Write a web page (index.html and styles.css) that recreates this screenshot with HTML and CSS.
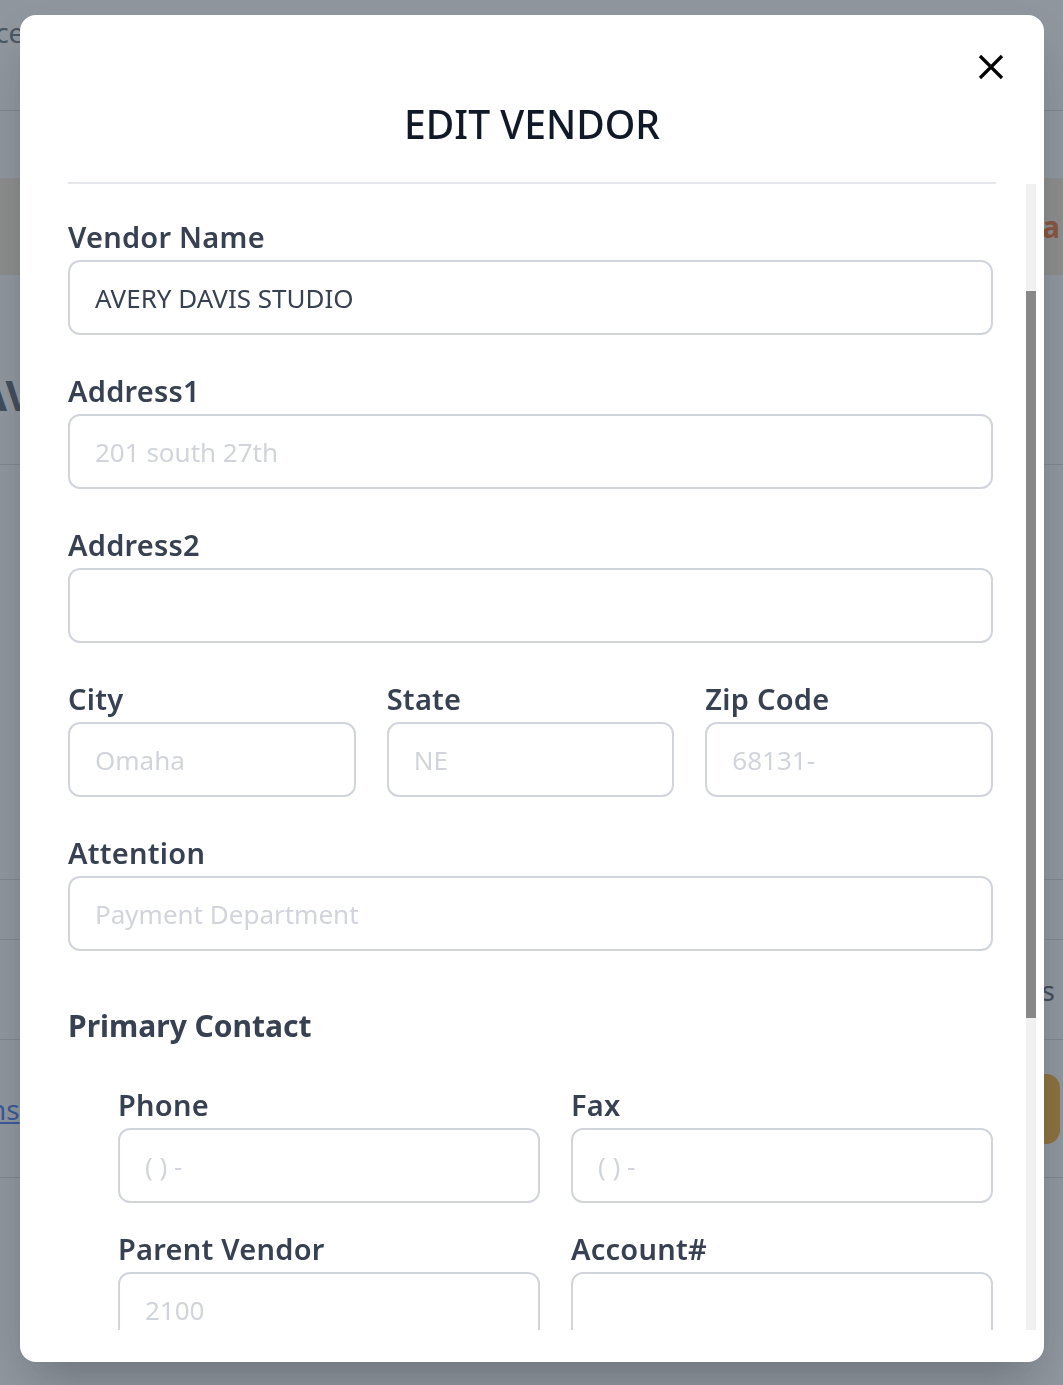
FILE: index.html
```html
<!DOCTYPE html>
<html lang="en">
<head>
<meta charset="utf-8">
<title>Edit Vendor</title>
<link rel="stylesheet" href="styles.css">
</head>
<body>
<div class="page">
  <div class="bg-row bg-top"><span class="bg-crumb">Invoice</span></div>
  <div class="bg-row bg-gap"></div>
  <div class="bg-band"><span class="bg-band-text">Data</span></div>
  <div class="bg-row bg-title"><span class="bg-name">AVERY DAVIS STUDIO</span></div>
  <div class="bg-row bg-tall"></div>
  <div class="bg-row bg-short"></div>
  <div class="bg-row bg-mid"><span class="bg-right-text">Details</span></div>
  <div class="bg-row bg-actions"><a class="bg-link">Transactions</a><span class="bg-btn">Save</span></div>
</div>
<div class="backdrop"></div>
<div class="modal" role="dialog" aria-labelledby="modal-title">
  <button class="close" type="button" aria-label="Close">
    <svg viewBox="0 0 26 26" width="26" height="26"><path d="M2 2L24 24M24 2L2 24" stroke="#000" stroke-width="3.2" fill="none"/></svg>
  </button>
  <div class="modal-header">
    <h2 class="modal-title" id="modal-title">EDIT VENDOR</h2>
  </div>
  <div class="modal-main">
    <div class="modal-body">
      <form class="form">
        <div class="field">
          <label class="label">Vendor Number</label>
          <input class="input" type="text" placeholder="1045">
        </div>
        <div class="field">
          <label class="label">Vendor Name</label>
          <input class="input" type="text" value="AVERY DAVIS STUDIO">
        </div>
        <div class="field">
          <label class="label">Address1</label>
          <input class="input" type="text" placeholder="201 south 27th">
        </div>
        <div class="field">
          <label class="label">Address2</label>
          <input class="input" type="text">
        </div>
        <div class="row-3">
          <div>
            <label class="label">City</label>
            <input class="input" type="text" placeholder="Omaha">
          </div>
          <div>
            <label class="label">State</label>
            <input class="input" type="text" placeholder="NE">
          </div>
          <div>
            <label class="label">Zip Code</label>
            <input class="input" type="text" placeholder="68131-">
          </div>
        </div>
        <div class="field">
          <label class="label">Attention</label>
          <input class="input" type="text" placeholder="Payment Department">
        </div>
        <h3 class="section-title">Primary Contact</h3>
        <div class="contact-grid">
          <div>
            <label class="label">Phone</label>
            <input class="input" type="text" placeholder="( ) -">
          </div>
          <div>
            <label class="label">Fax</label>
            <input class="input" type="text" placeholder="( ) -">
          </div>
          <div>
            <label class="label">Parent Vendor</label>
            <input class="input" type="text" placeholder="2100">
          </div>
          <div>
            <label class="label">Account#</label>
            <input class="input" type="text">
          </div>
          <div>
            <label class="label">Email</label>
            <input class="input" type="text">
          </div>
          <div>
            <label class="label">Website</label>
            <input class="input" type="text">
          </div>
        </div>
        <div class="field field-after">
          <label class="label">Terms</label>
          <input class="input" type="text">
        </div>
        <div class="actions">
          <button type="button" class="btn btn-cancel">Cancel</button>
          <button type="button" class="btn btn-save">Save</button>
        </div>
      </form>
    </div>
    <div class="scrollbar"><div class="scrollbar-thumb"></div></div>
  </div>
</div>
<script src="script.js"></script>
</body>
</html>
```

FILE: styles.css
```css
html, body {
  margin: 0;
  padding: 0;
}
body {
  width: 1063px;
  height: 1385px;
  overflow: hidden;
  background: #ffffff;
  font-family: "Noto Sans", "Open Sans", "DejaVu Sans", sans-serif;
}

/* background page */
.page {
  width: 1063px;
  height: 1385px;
  overflow: hidden;
}
.bg-row {
  border-bottom: 1px solid #d1d5db;
  box-sizing: border-box;
  display: flex;
  align-items: center;
}
.bg-top {
  height: 111px;
  align-items: flex-start;
  padding-top: 14px;
}
.bg-crumb {
  margin-left: -70px;
  font-size: 28px;
  line-height: 36px;
  color: #4b5563;
}
.bg-gap {
  height: 67px;
  border-bottom: 0;
}
.bg-band {
  height: 97px;
  background: #f7e7d1;
  display: flex;
  align-items: center;
  justify-content: flex-end;
}
.bg-band-text {
  margin-right: 3px;
  font-size: 30px;
  font-weight: 700;
  color: #ea580c;
}
.bg-title {
  height: 190px;
  padding-top: 50px;
}
.bg-name {
  margin-left: -22px;
  font-size: 42px;
  font-weight: 700;
  color: #374151;
  white-space: nowrap;
}
.bg-tall {
  height: 415px;
}
.bg-short {
  height: 60px;
}
.bg-mid {
  height: 100px;
  justify-content: flex-end;
}
.bg-right-text {
  margin-right: 8px;
  font-size: 28px;
  color: #374151;
}
.bg-actions {
  height: 138px;
  justify-content: space-between;
}
.bg-link {
  margin-left: -146px;
  font-size: 28px;
  color: #2563eb;
  text-decoration: underline;
}
.bg-btn {
  margin-right: 3px;
  width: 160px;
  height: 70px;
  border-radius: 14px;
  background: #f59e0b;
  color: #ffffff;
  font-size: 26px;
  display: flex;
  align-items: center;
  justify-content: center;
}

.backdrop {
  position: fixed;
  inset: 0;
  background: rgba(75, 85, 99, 0.62);
}

/* modal */
.modal {
  position: fixed;
  left: 20px;
  top: 15px;
  width: 1024px;
  height: 1347px;
  box-sizing: border-box;
  background: #ffffff;
  border-radius: 16px;
  padding: 0 8px 32px 48px;
  display: flex;
  flex-direction: column;
  box-shadow: 0 25px 50px -12px rgba(0, 0, 0, 0.25);
}
.close {
  position: absolute;
  top: 39px;
  right: 40px;
  width: 26px;
  height: 26px;
  padding: 0;
  border: 0;
  background: none;
  cursor: pointer;
}
.close svg {
  display: block;
}
.modal-header {
  margin-right: 40px;
  padding: 85px 0 34px;
  border-bottom: 2px solid #e5e7eb;
  flex: none;
}
.modal-title {
  margin: 0;
  text-align: center;
  font-size: 39px;
  line-height: 48px;
  font-weight: 500;
  color: #111827;
}
.modal-main {
  flex: 1;
  min-height: 0;
  display: flex;
}
.modal-body {
  flex: 1;
  min-width: 0;
  overflow: hidden;
}
.scrollbar {
  flex: none;
  width: 10px;
  background: #f1f1f1;
}
.scrollbar-thumb {
  width: 10px;
  height: 727px;
  background: #888888;
}

.form {
  display: flex;
  flex-direction: column;
  padding: 48px 33px 64px 0;
}
.field {
  margin-bottom: 36px;
}
.field-after {
  margin-top: 36px;
  margin-bottom: 0;
}
.label {
  display: block;
  font-size: 29px;
  line-height: 40px;
  letter-spacing: 0.25px;
  font-weight: 600;
  color: #374151;
  margin-bottom: 3px;
}
.input {
  display: block;
  width: 100%;
  height: 75px;
  box-sizing: border-box;
  border: 2px solid #d1d5db;
  border-radius: 12px;
  padding: 0 25px;
  font-family: inherit;
  font-size: 26px;
  color: #374151;
  background: #ffffff;
  outline: none;
}
.input::placeholder {
  color: #d1d5db;
  opacity: 1;
}
.row-3 {
  display: grid;
  grid-template-columns: repeat(3, 1fr);
  column-gap: 31px;
  margin-bottom: 36px;
}
.section-title {
  margin: 19px 0 39px;
  font-size: 30px;
  line-height: 40px;
  font-weight: 700;
  color: #374151;
}
.contact-grid {
  margin-left: 50px;
  display: grid;
  grid-template-columns: 1fr 1fr;
  column-gap: 31px;
  row-gap: 26px;
}
.actions {
  margin-top: 48px;
  height: 64px;
  display: flex;
  justify-content: flex-end;
  gap: 24px;
}
.btn {
  height: 64px;
  padding: 0 32px;
  border-radius: 12px;
  font-family: inherit;
  font-size: 26px;
  border: 2px solid #d1d5db;
  background: #ffffff;
  color: #374151;
}
.btn-save {
  background: #f59e0b;
  border-color: #f59e0b;
  color: #ffffff;
}
```

FILE: script.js
```js
(function () {
  var body = document.querySelector('.modal-body');
  var thumb = document.querySelector('.scrollbar-thumb');
  body.scrollTop = 169;
  var view = body.clientHeight;
  var total = body.scrollHeight;
  var size = view * view / total;
  var offset = body.scrollTop / (total - view) * (view - size);
  thumb.style.height = size + 'px';
  thumb.style.marginTop = offset + 'px';
})();
```
